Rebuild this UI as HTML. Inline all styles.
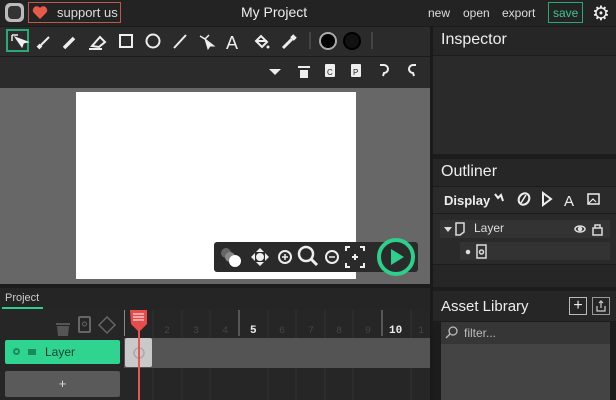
<!DOCTYPE html>
<html><head><style>
*{box-sizing:border-box;margin:0;padding:0}
body{width:616px;height:400px;background:#1c1c1c;font-family:"Liberation Sans",sans-serif;color:#eee;position:relative;overflow:hidden}
.a{position:absolute}
svg{position:absolute}
</style></head><body>
<!-- top bar -->
<div class="a" style="left:0;top:0;width:616px;height:26px;background:#232323"></div>
<div class="a" style="left:5px;top:3px;width:19px;height:19px;border-radius:5px;background:#bbb"></div>
<div class="a" style="left:8px;top:6px;width:13px;height:13px;border-radius:4px;background:#333"></div>
<div class="a" style="left:28px;top:2px;width:93px;height:21px;border:1px solid #c0584a"></div>
<svg style="left:32px;top:5px" width="16" height="15"><path d="M8 14L1.5 7.5A3.8 3.8 0 0 1 8 3a3.8 3.8 0 0 1 6.5 4.5z" fill="#e55a4a"/></svg>
<div class="a" style="left:57px;top:5px;font-size:13px;color:#ddd">support us</div>
<div class="a" style="left:241px;top:4px;font-size:14px;color:#eee">My Project</div>
<div class="a" style="left:428px;top:6px;font-size:12px;color:#ddd">new</div>
<div class="a" style="left:463px;top:6px;font-size:12px;color:#ddd">open</div>
<div class="a" style="left:502px;top:6px;font-size:12px;color:#ddd">export</div>
<div class="a" style="left:548px;top:2px;width:35px;height:21px;border:1px solid #2aa878;color:#3cc88f;font-size:12px;padding:3px 0 0 4px">save</div>
<div class="a" style="left:592px;top:1px;font-size:20px;color:#eee">⚙</div>
<!-- toolbar -->
<div class="a" style="left:0;top:27px;width:430px;height:29px;background:#2b2b2b"></div>
<div class="a" style="left:0;top:56px;width:430px;height:32px;background:#2b2b2b;border-top:1px solid #1a1a1a"></div>
<div class="a" style="left:6px;top:29px;width:23px;height:23px;border:2px solid #2aa878"></div>
<svg style="left:0;top:27px" width="430" height="60" fill="none" stroke="#eee" stroke-width="2">
<path d="M12 8h6M12 8v6" stroke-width="1.5"/><path d="M15 10l7 10 1.5-4 4.5-1z" fill="#eee" stroke-width="1"/>
<path d="M38 21l3-3" stroke-width="4"/><path d="M41 18l8-8" stroke-width="2"/>
<path d="M64 21l10-10" stroke-width="3.5"/>
<path d="M92 19l8-9 5 5-6 5zM89 22h13" stroke-width="2"/>
<rect x="120" y="8" width="12" height="12"/><circle cx="153" cy="14" r="6.5"/>
<path d="M174 21l12-13"/><path d="M200 9l5 3 4-4" stroke-width="1.5"/><path d="M205 12l3 10 2-3 4 0z" fill="#eee" stroke-width="1"/>
<text x="226" y="22" fill="#eee" stroke="none" font-size="18" font-family="Liberation Sans">A</text>
<path d="M256 14l5-5 6 6-5 5zM256 14h11" stroke-width="2"/><circle cx="268" cy="20" r="1.5" fill="#eee" stroke="none"/>
<path d="M283 21l9-9" stroke-width="3"/><path d="M292 12l3-3" stroke-width="5"/>
<line x1="310" y1="5" x2="310" y2="22" stroke="#444"/>
<circle cx="328" cy="14" r="8" fill="#000" stroke="#aaa" stroke-width="2"/>
<circle cx="352" cy="14" r="8" fill="#111" stroke="#000" stroke-width="2"/>
<line x1="372" y1="5" x2="372" y2="22" stroke="#444"/>
<path d="M269 42h12l-6 6z" fill="#eee" stroke="none"/>
<path d="M298 40h12" stroke-width="2"/><path d="M300 43h8v8h-8z" fill="#eee" stroke="none"/>
<rect x="325" y="37" width="10" height="13" rx="1" fill="#eee" stroke="none"/><text x="327" y="48" font-size="8" fill="#222" stroke="none">C</text>
<rect x="351" y="37" width="10" height="13" rx="1" fill="#eee" stroke="none"/><text x="353" y="48" font-size="8" fill="#222" stroke="none">P</text>
<path d="M380 38h4a4 4 0 0 1 0 8l-1 3" stroke-width="2"/><path d="M416 38h-3a4 4 0 0 0 0 8l1 3" stroke-width="2"/>
</svg>
<!-- canvas area -->
<div class="a" style="left:0;top:88px;width:430px;height:196px;background:#676767"></div>
<div class="a" style="left:76px;top:92px;width:280px;height:187px;background:#fff"></div>
<div class="a" style="left:214px;top:242px;width:204px;height:30px;background:#2a2a2a;border-radius:3px"></div>
<svg style="left:214px;top:236px" width="210" height="44">
<circle cx="12" cy="17" r="5" fill="#666"/><circle cx="16" cy="21" r="5" fill="#888"/><circle cx="21" cy="25" r="6" fill="#fff"/>
<path d="M46 12l4 4h-8zM46 30l4-4h-8zM37 21l4-4v8zM55 21l-4-4v8z" fill="#eee"/><circle cx="46" cy="21" r="4" fill="#eee"/>
<circle cx="71" cy="21" r="6" fill="none" stroke="#eee" stroke-width="2"/><path d="M68 21h6M71 18v6" stroke="#eee" stroke-width="1.5"/>
<circle cx="92" cy="18" r="7" fill="none" stroke="#eee" stroke-width="2.5"/><path d="M97 23l6 6" stroke="#eee" stroke-width="3"/>
<circle cx="118" cy="21" r="6" fill="none" stroke="#eee" stroke-width="2"/><path d="M115 21h6" stroke="#eee" stroke-width="1.5"/>
<path d="M132 15v-4h4M150 15v-4h-4M132 27v4h4M150 27v4h-4M138 21h6M141 18v6" fill="none" stroke="#eee" stroke-width="2"/>
<circle cx="182" cy="21" r="17" fill="#2a2a2a" stroke="#2ecf8c" stroke-width="4"/><path d="M177 13l13 8-13 8z" fill="#2ecf8c"/>
</svg>
<!-- bottom panel -->
<div class="a" style="left:0;top:284px;width:430px;height:4px;background:#1c1c1c"></div>
<div class="a" style="left:0;top:288px;width:430px;height:22px;background:#252525"></div>
<div class="a" style="left:5px;top:292px;font-size:11px;color:#ccc">Project</div>
<div class="a" style="left:2px;top:307px;width:41px;height:2px;background:#2ecf8c"></div>
<div class="a" style="left:0;top:310px;width:430px;height:90px;background:#262626"></div>
<svg style="left:0;top:310px" width="430" height="90">
<path d="M56 14h14" stroke="#555" stroke-width="2"/><path d="M57 16h12l-1 10h-10z" fill="#555"/>
<rect x="79" y="7" width="11" height="15" rx="1" fill="none" stroke="#666" stroke-width="2"/><circle cx="84.5" cy="14" r="2" fill="none" stroke="#666"/>
<path d="M107 7l8 8-8 8-8-8z" fill="none" stroke="#666" stroke-width="1.5"/>
<g stroke="#333" stroke-width="1"><line x1="153" y1="0" x2="153" y2="90"/><line x1="182" y1="0" x2="182" y2="90"/><line x1="210" y1="0" x2="210" y2="90"/><line x1="268" y1="0" x2="268" y2="90"/><line x1="296" y1="0" x2="296" y2="90"/><line x1="325" y1="0" x2="325" y2="90"/><line x1="353" y1="0" x2="353" y2="90"/><line x1="411" y1="0" x2="411" y2="90"/></g>
<line x1="124.5" y1="0" x2="124.5" y2="26" stroke="#888"/><line x1="239" y1="0" x2="239" y2="26" stroke="#888"/><line x1="382" y1="0" x2="382" y2="26" stroke="#888"/>
<g font-size="10" fill="#444" font-family="Liberation Mono"><text x="164" y="23">2</text><text x="193" y="23">3</text><text x="222" y="23">4</text><text x="279" y="23">6</text><text x="308" y="23">7</text><text x="336" y="23">8</text><text x="365" y="23">9</text><text x="418" y="23">1</text></g>
<g font-size="11" fill="#eee" font-weight="bold" font-family="Liberation Mono"><text x="250" y="23">5</text><text x="389" y="23">10</text></g>
<rect x="124" y="28" width="306" height="30" fill="#545454"/>
<rect x="125" y="28" width="27" height="29" rx="2" fill="#c9c9c9"/><circle cx="139" cy="43" r="5" fill="none" stroke="#aaa" stroke-width="1.5"/>
<path d="M130 0h17v14l-8 8-8-8z" fill="#e84b4b"/><path d="M133 4h11M133 7h11M133 10h11" stroke="#fff" stroke-width="1"/>
<line x1="139" y1="20" x2="139" y2="90" stroke="#e85555" stroke-width="2"/>
</svg>
<div class="a" style="left:5px;top:340px;width:115px;height:24px;background:#2ed48f;border-radius:2px"></div>
<div class="a" style="left:13px;top:348px;width:7px;height:7px;border-radius:50%;border:2px solid #1a8a5c"></div>
<div class="a" style="left:28px;top:349px;width:8px;height:6px;background:#1a8a5c"></div>
<div class="a" style="left:45px;top:345px;font-size:12px;color:#143;">Layer</div>
<div class="a" style="left:5px;top:371px;width:115px;height:26px;background:#5a5a5a;border-radius:2px;text-align:center;font-size:13px;color:#ddd;padding-top:5px">+</div>
<!-- right panel -->
<div class="a" style="left:430px;top:26px;width:3px;height:374px;background:#1a1a1a"></div>
<div class="a" style="left:433px;top:27px;width:183px;height:28px;background:#262626"></div>
<div class="a" style="left:441px;top:31px;font-size:16px;color:#eee">Inspector</div>
<div class="a" style="left:433px;top:56px;width:183px;height:98px;background:#2a2a2a"></div>
<div class="a" style="left:433px;top:159px;width:183px;height:27px;background:#262626"></div>
<div class="a" style="left:441px;top:163px;font-size:16px;color:#eee">Outliner</div>
<div class="a" style="left:433px;top:187px;width:183px;height:26px;background:#2a2a2a"></div>
<div class="a" style="left:444px;top:193px;font-size:13px;font-weight:bold;color:#eee">Display</div>
<svg style="left:490px;top:187px" width="126" height="26" fill="none" stroke="#eee" stroke-width="2">
<path d="M5 7l3 4 3-3 2 6"/><ellipse cx="34" cy="12" rx="5" ry="6" transform="rotate(35 34 12)"/><path d="M36 8l-5 8" stroke-width="1.5"/><path d="M53 6l8 6-8 6z"/>
<text x="74" y="19" fill="#eee" stroke="none" font-size="15">A</text><rect x="98" y="7" width="11" height="10" stroke-width="1.5"/><path d="M99 16l4-4 3 3" stroke-width="1.2"/>
</svg>
<div class="a" style="left:433px;top:214px;width:183px;height:50px;background:#2a2a2a"></div>
<div class="a" style="left:440px;top:220px;width:170px;height:18px;background:#333"></div>
<div class="a" style="left:460px;top:242px;width:150px;height:18px;background:#333"></div>
<svg style="left:440px;top:220px" width="176" height="44" fill="none" stroke="#ddd" stroke-width="1.5">
<path d="M4 7h8l-4 5z" fill="#ddd" stroke="none"/><path d="M16 3h8v9l-4 3h-4z"/>
<ellipse cx="140" cy="9" rx="5" ry="3"/><circle cx="140" cy="9" r="1.5" fill="#ddd"/><rect x="153" y="8" width="9" height="7"/><path d="M155 8v-3h5v3"/>
<circle cx="28" cy="32" r="1.5" fill="#ddd"/><rect x="37" y="25" width="9" height="13"/><circle cx="41.5" cy="32" r="2"/>
</svg>
<div class="a" style="left:474px;top:221px;font-size:12px;color:#ddd">Layer</div>
<div class="a" style="left:433px;top:265px;width:183px;height:22px;background:#262626"></div>
<div class="a" style="left:433px;top:291px;width:183px;height:30px;background:#262626"></div>
<div class="a" style="left:441px;top:298px;font-size:15px;color:#eee">Asset Library</div>
<div class="a" style="left:569px;top:297px;width:18px;height:18px;border:1px solid #bbb;color:#eee;font-size:16px;line-height:15px;text-align:center">+</div>
<div class="a" style="left:592px;top:297px;width:18px;height:18px;border:1px solid #999"></div>
<svg style="left:592px;top:297px" width="18" height="18" fill="none" stroke="#ccc" stroke-width="1.2"><path d="M5 9v5h8v-5M9 4v7M7 6l2-2 2 2"/></svg>
<div class="a" style="left:441px;top:322px;width:169px;height:22px;background:#363636"></div>
<svg style="left:444px;top:325px" width="16" height="16" fill="none" stroke="#bbb" stroke-width="1.3"><circle cx="9" cy="6" r="4"/><path d="M6 9l-4 4"/></svg>
<div class="a" style="left:464px;top:326px;font-size:12px;color:#bbb">filter...</div>
<div class="a" style="left:441px;top:344px;width:169px;height:56px;background:#444"></div>
</body></html>
